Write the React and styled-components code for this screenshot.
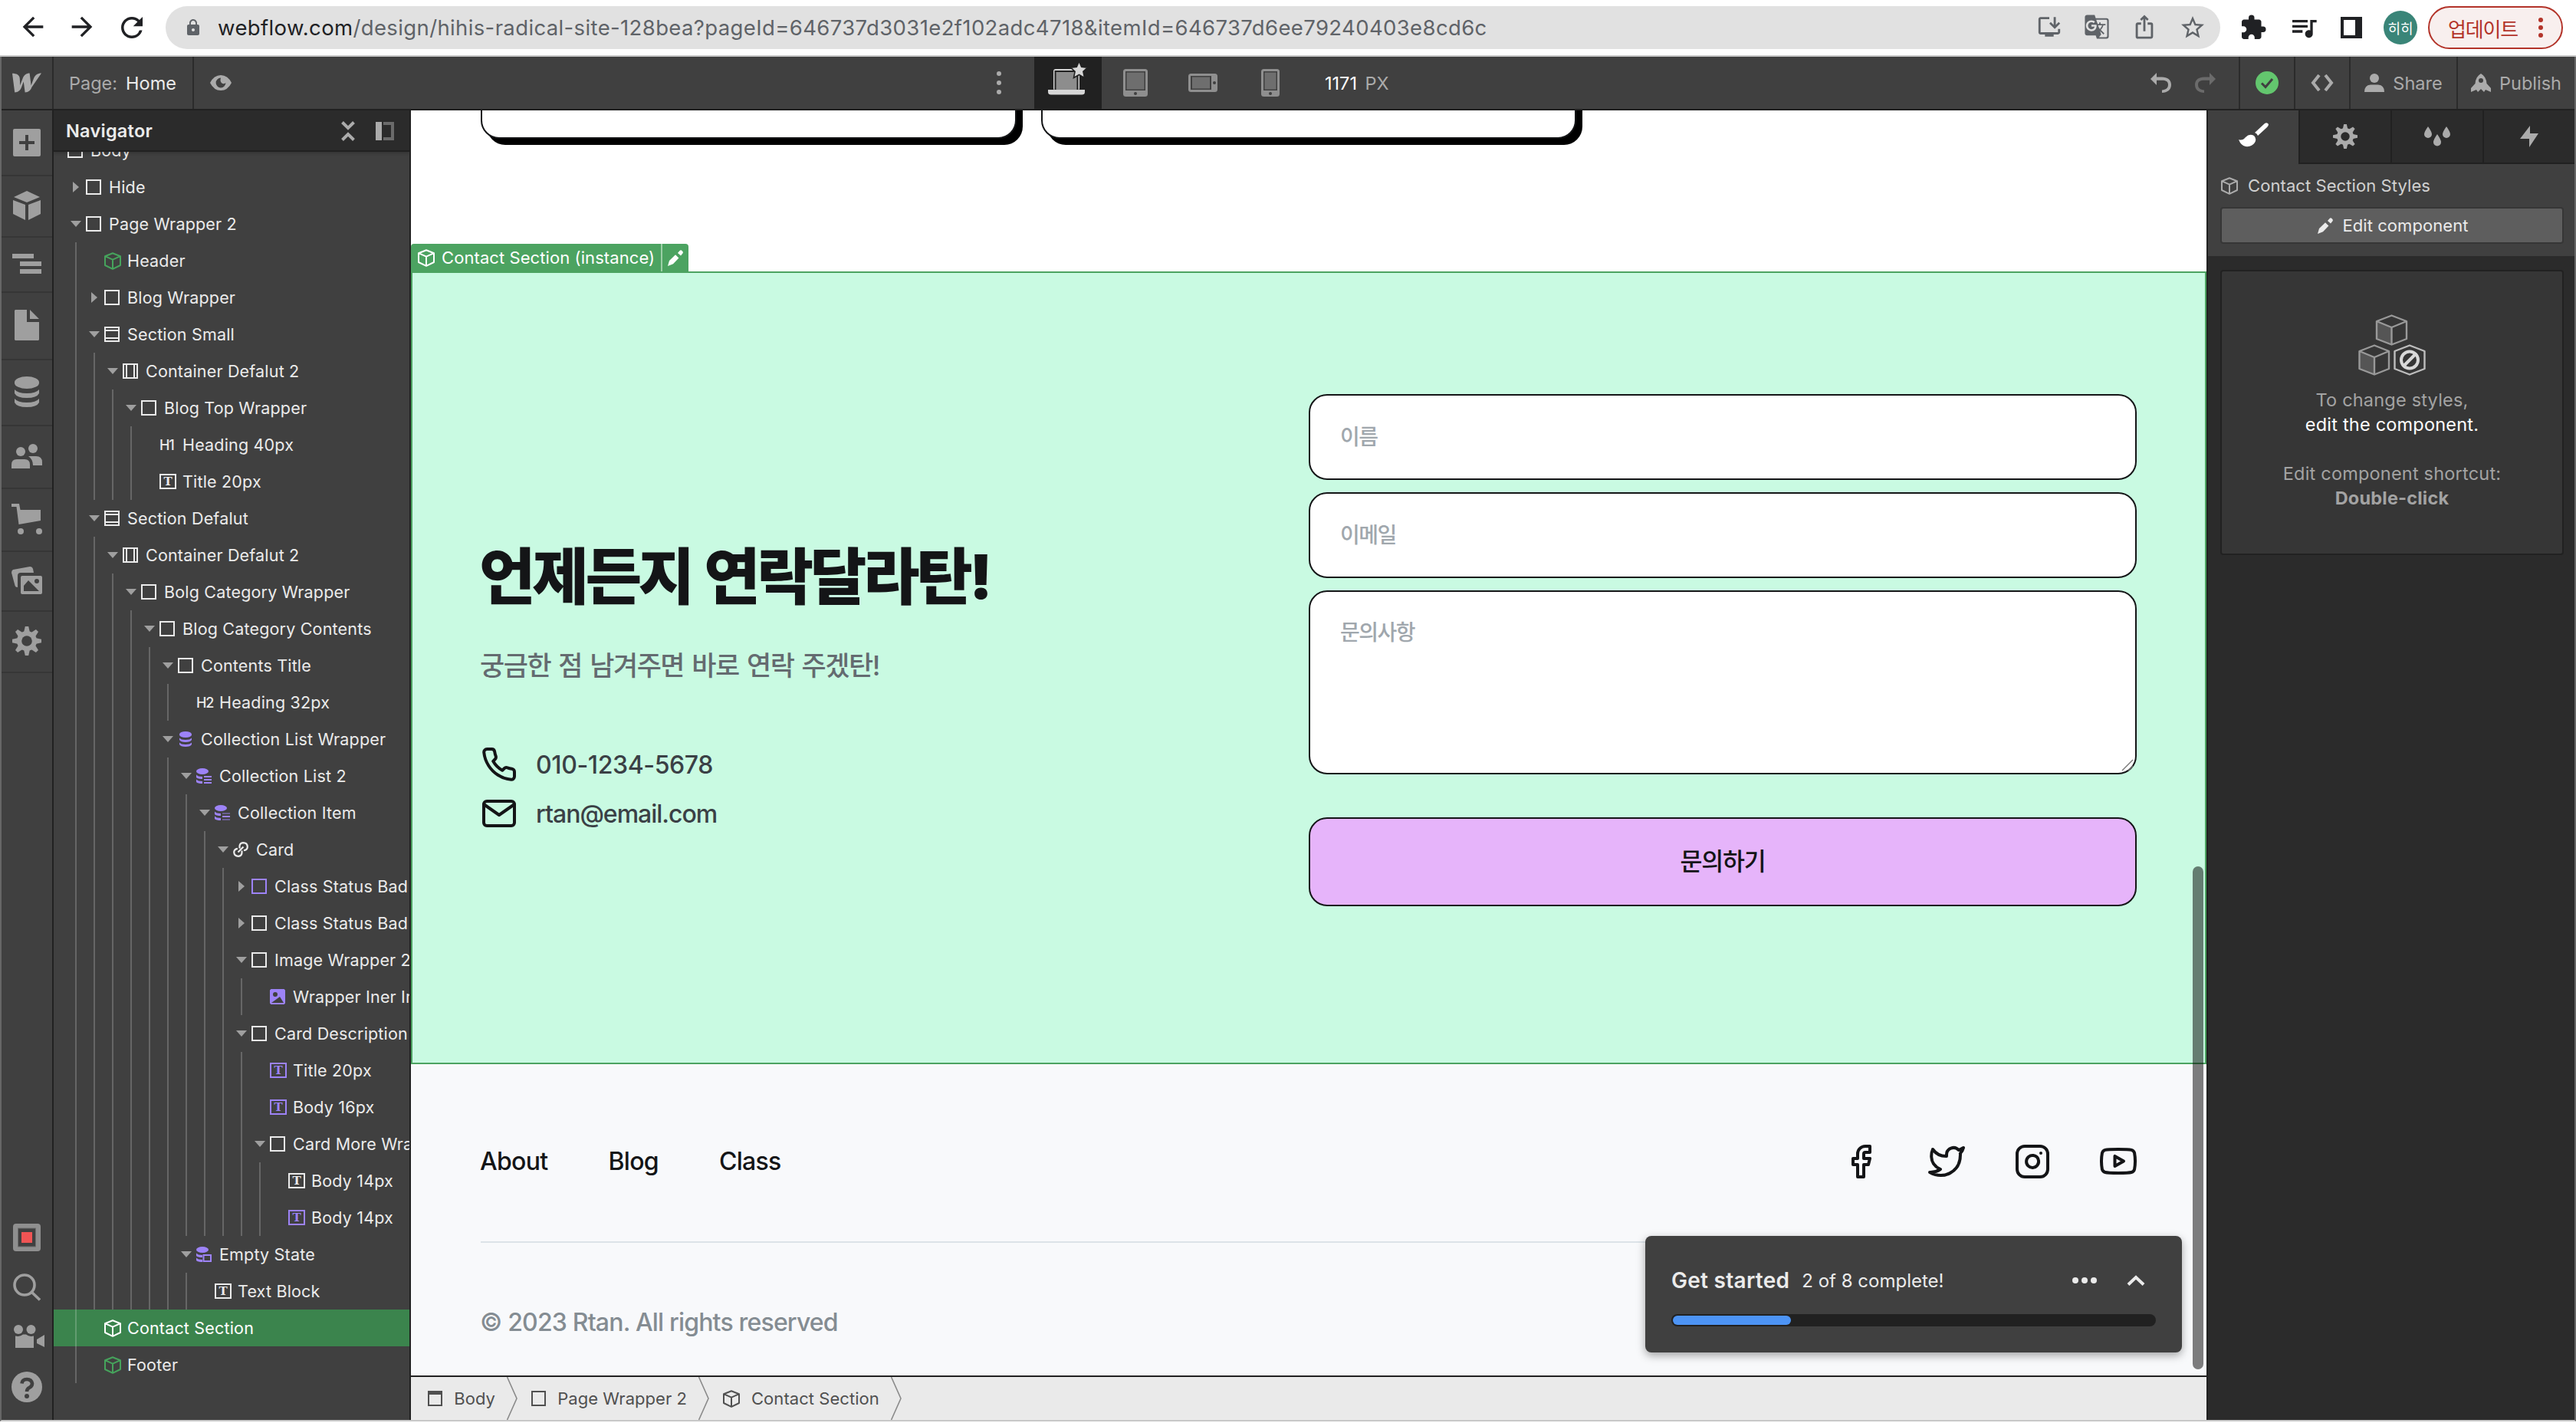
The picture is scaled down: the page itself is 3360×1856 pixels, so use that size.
import React from 'react'
import styled, { createGlobalStyle } from 'styled-components'
import {
  MdArrowBack, MdArrowForward, MdRefresh, MdLock, MdInstallDesktop, MdGTranslate,
  MdIosShare, MdStarBorder, MdExtension, MdQueueMusic,
} from 'react-icons/md'
import { FiPhone, FiMail, FiFacebook, FiTwitter, FiInstagram, FiYoutube } from 'react-icons/fi'

const GlobalStyle = createGlobalStyle`
  *, *::after { box-sizing: border-box; }
  body {
    margin: 0;
    background: #fff;
    font-family: Inter, "Noto Sans CJK KR", sans-serif;
    overflow: hidden;
  }
  svg { display: block; flex: none; }
`

/* ---------- icons ---------- */

const Svg = ({ w, h, children, ...rest }) => (
  <svg width={w} height={h} viewBox={`0 0 ${w} ${h}`} fill="currentColor" {...rest}>{children}</svg>
)

const Cube = ({ sw = 2 }) => (
  <Svg w={22} h={23} fill="none" stroke="currentColor" strokeWidth={sw} strokeLinejoin="round">
    <path d="M11 1.2 21 5.2V17L11 21.8 1 17V5.2ZM1 5.2 11 9.6 21 5.2M11 9.6V21.8" />
  </Svg>
)

const Pencil = () => (
  <Svg w={20} h={21}>
    <path d="M0 21 2 14 10 6.2 14.4 10.4 7 18.2ZM13 4 15.6 1Q17 -.4 18.8 1.2 20.6 3 19.4 4.6L17 7.6Z" />
  </Svg>
)

const Gear = ({ size = 38, color, hole }) => (
  <svg width={size} height={size} viewBox="0 0 38 38" fill={color}>
    {[0, 45, 90, 135, 180, 225, 270, 315].map((a) => (
      <path key={a} d="M15 8 16.8 0H21.2L23 8Z" transform={`rotate(${a} 19 19)`} />
    ))}
    <circle cx="19" cy="19" r="13" />
    <circle cx="19" cy="19" r="6.8" fill={hole} />
  </svg>
)

const Database = ({ w, h }) => (
  <svg width={w} height={h} viewBox="0 0 32 40" fill="currentColor">
    <rect width="32" height="16" rx="16" ry="7.5" />
    <path d="M0 17Q4 22 16 22T32 17V22Q29 28 16 28T0 22Z" />
    <path d="M0 29Q4 34 16 34T32 29V34Q29 40 16 40T0 34Z" />
  </svg>
)

const Logo = () => (
  <Svg w={38} h={26}>
    <path d="M38 .5C33 .5 29.6 3 28 7.2L24.6 16.5 22.6.5C18.2.5 15.2 3 13.8 6.8L10.2 16.2 9.8 7.2C9.4 2.8 5.6.8 0 .8L3.2 25.5C8 25.5 10.6 22.6 12 18.8L14.8 11.4 16.6 25.5C21.4 25.5 24 22.6 25.4 18.8Z" />
  </Svg>
)

const Eye = () => (
  <Svg w={28} h={20}>
    <path fillRule="evenodd" d="M0 10Q5 0 14 0T28 10Q23 20 14 20T0 10ZM14 3.6A6.4 6.4 0 1 0 20.4 10Q18 12 15.4 10.6 12.6 8.6 14 3.6Z" />
  </Svg>
)

const Undo = () => (
  <Svg w={27} h={26}>
    <path d="M0 8 8 0V5.6H15C22 5.6 27 9 27 15.6S22 26 15 26V22.4C20 22.4 23 20 23 15.6S20 9.8 15 9.8H8V16Z" />
  </Svg>
)

const Laptop = () => (
  <Svg w={52} h={44}>
    <rect x="7" y="10" width="34" height="28" rx="3" fill="#d6d6d6" />
    <rect x="8.5" y="12" width="31" height="26" fill="#212121" />
    <rect x="10.5" y="14" width="27" height="23" fill="#8d8d8d" />
    <path d="M0 37H48V40Q48 43.5 44 43.5H4Q0 43.5 0 40Z" fill="#d6d6d6" />
    <path d="m40.500 0 3.200 7.200 7.800 1-5.600 5.200 1.600 8-7-3.900-7 3.900 1.600-8-5.600-5.200 7.800-1z" fill="#d6d6d6" stroke="#212121" strokeWidth="1.600" />
  </Svg>
)

const Device = ({ w, h, side }) => (
  <Svg w={w} h={h}>
    <rect width={w} height={h} rx="3.500" fill="#8f8f8f" />
    {side
      ? <><rect x="3" y="3" width={w - 11} height={h - 6} fill="#404040" /><rect x="5" y="4.500" width={w - 15} height={h - 9} fill="#6e6e6e" /><circle cx={w - 4} cy={h / 2} r="2" fill="#404040" /></>
      : <><rect x="3" y="3" width={w - 6} height={h - 11} fill="#404040" /><rect x="4.500" y="4.500" width={w - 9} height={h - 14} fill="#6e6e6e" /><circle cx={w / 2} cy={h - 4} r="2" fill="#404040" /></>}
  </Svg>
)

const Users = () => (
  <Svg w={40} h={32}>
    <circle cx="28" cy="6" r="6" />
    <path d="M22 16H32Q40 16 40 24V28H28Q28 20 22 16Z" />
    <circle cx="12" cy="10" r="6" />
    <path d="M0 32V27Q0 20 7 20H17Q24 20 24 27V32Z" />
  </Svg>
)

const Cart = () => (
  <Svg w={40} h={40}>
    <path d="M0 0H10L11.500 8H38V22L9.500 27 6.500 4H0Z" />
    <circle cx="12" cy="36" r="4" /><circle cx="36" cy="36" r="4" />
  </Svg>
)

const Pictures = () => (
  <Svg w={40} h={36}>
    <path d="M2 4 24 0Q27 0 28 3L29 8H12Q8 8 8 12V27Q5 27 4.600 25L0 8Q0 5 2 4Z" />
    <path fillRule="evenodd" d="M14 12H38Q40 12 40 14V34Q40 36 38 36H14Q12 36 12 34V14Q12 12 14 12ZM16 32H36L22 18 16 25ZM33 16A3 3 0 1 0 33 22 3 3 0 1 0 33 16Z" />
  </Svg>
)

const Record = () => (
  <Svg w={36} h={36}>
    <rect width="36" height="36" rx="4" fill="#8f8f8f" />
    <rect x="6.500" y="6" width="23" height="24" fill="#404040" stroke="#6e6e6e" />
    <rect x="11" y="11" width="14" height="14" fill="#f05454" />
  </Svg>
)

const Search = () => (
  <Svg w={36} h={36} fill="none" stroke="currentColor" strokeWidth="3.600">
    <circle cx="15" cy="15" r="13" /><path d="M24 24 35 34.500" />
  </Svg>
)

const Camera = () => (
  <Svg w={40} h={31}>
    <circle cx="6" cy="6" r="6" /><circle cx="22.500" cy="6" r="6" />
    <path d="M2 14.500Q8 16 12 12.500H16Q20 16 26 14.500V30H2ZM30 19 40 13V29L30 24Z" />
  </Svg>
)

const Help = () => (
  <Svg w={40} h={40}>
    <circle cx="20" cy="20" r="20" />
    <path d="M13.500 15.500Q14 10 20 10T27 15.500Q27 19 23.500 20.800 20 22.600 20 26" fill="none" stroke="#404040" strokeWidth="4.600" />
    <circle cx="20" cy="32" r="3" fill="#404040" />
  </Svg>
)

const CollectionPart = ({ kind }) => (
  <Svg w={20} h={20}>
    <rect width="16" height="8" rx="8" ry="4" />
    <path d="M0 8.500Q2 11 8 11V14Q2 14 0 12ZM0 14.500Q2 17 8 17V20Q2 20 0 18Z" />
    {kind === 'box'
      ? <rect x="9.500" y="11" width="9.500" height="8" fill="none" stroke="currentColor" strokeWidth="2" />
      : <><path d="M10 10H20V12H10ZM10 18H20V20H10Z" opacity={kind === 'item' ? 0.45 : 1} /><path d="M10 14H20V16H10Z" /></>}
  </Svg>
)

const Chain = () => (
  <Svg w={20} h={20} fill="none" stroke="currentColor" strokeWidth="2.200">
    <path d="M8.500 8.500V5.500Q9 1.500 13 1.200 18.600 1.200 18.800 6.600 18.600 10.600 14 11.200M11.500 11.500V14.500Q11 18.500 7 18.800 1.400 18.800 1.200 13.400 1.400 9.400 6 8.800M6.500 13.500 13.500 6.500" />
  </Svg>
)

const Picture = () => (
  <Svg w={20} h={20}>
    <path fillRule="evenodd" d="M1.500 0H18.500L20 1.500V18.500L18.500 20H1.500L0 18.500V1.500ZM2 18H18L13 10ZM7 4A3 3 0 1 0 7 10 3 3 0 1 0 7 4Z" />
  </Svg>
)

const Boxes = () => (
  <Svg w={88} h={80} fill="none" strokeWidth="2.400" strokeLinejoin="round">
    <g stroke="#999">
      <path d="M24 9.500 43.500 17V39L24 32Z" fill="#555" stroke="none" />
      <path d="M43.500 1.500 63 9V32L43.500 39.500 24 32V9ZM24 9 43.500 17 63 9M43.500 17V39.500" />
      <path d="M1.500 48 21 56V78L1.500 71Z" fill="#555" stroke="none" />
      <path d="M21 40.500 40 48V71L21 78.500 1.500 71V48ZM1.500 48 21 56 40 48M21 56V78.500" />
    </g>
    <path d="M67 40.500 86.500 48V71L67 78.500 47.500 71V48Z" stroke="#bdbdbd" />
    <circle cx="67" cy="59.500" r="11" stroke="#d9d9d9" strokeWidth="4" />
    <path d="M59.500 67 74.500 52" stroke="#d9d9d9" strokeWidth="4" />
  </Svg>
)

const Chevron = () => (
  <Svg w={14} h={56} fill="none" stroke="#8a8a8a" strokeWidth="1.600">
    <path d="M.5 0 13 28 .5 56" />
  </Svg>
)

/* ---------- browser bar ---------- */

const BrowserBar = styled.header`
  display: flex;
  align-items: center;
  height: 74px;
  padding: 0 16px 0 23px;
  background: #fff;
  border-bottom: 2px solid #c9c9c9;
  color: #202124;
`
const NavButtons = styled.div`
  display: flex;
  gap: 24px;
  width: 193px;
`
const AddressBar = styled.div`
  display: flex;
  align-items: center;
  width: 2680px;
  height: 56px;
  padding: 0 18px 0 24px;
  border-radius: 28px;
  background: #e1e1e1;
  color: #5f6368;
`
const Url = styled.div`
  flex: 1;
  margin-left: 20px;
  font-size: 27.500px;
  letter-spacing: 0.37px;
  white-space: nowrap;
  b { font-weight: 400; color: #202124; }
`
const AddressIcons = styled.div`
  display: flex;
  gap: 28px;
`
const Extensions = styled.div`
  display: flex;
  align-items: center;
  gap: 28px;
  margin-left: 25px;
`
const SidePanel = styled.div`
  width: 28px;
  height: 28px;
  border: solid #202124;
  border-width: 4px 9px 4px 4px;
`
const Avatar = styled.div`
  display: grid;
  place-items: center;
  width: 44px;
  height: 44px;
  border-radius: 50%;
  background: #3a8578;
  color: #fff;
  font-size: 18px;
`
const UpdatePill = styled.div`
  display: flex;
  align-items: center;
  justify-content: space-between;
  width: 176px;
  height: 56px;
  margin-left: 14px;
  padding: 0 24px;
  border: 2px solid #b3342a;
  border-radius: 28px;
  background: #f8efee;
  color: #b3342a;
  font-size: 26px;
  letter-spacing: -1.200px;
`

/* ---------- designer frame ---------- */

const Frame = styled.div`
  display: flex;
  flex-direction: column;
  height: 1780px;
  border: solid #666;
  border-width: 0 2px;
  border-bottom: 2px solid #c8c8c8;
  background: #404040;
`
const Toolbar = styled.div`
  display: flex;
  align-items: center;
  height: 70px;
  flex: none;
  border-bottom: 2px solid #212121;
  color: #ababab;
  font-size: 23.500px;
`
const LogoCell = styled.div`
  display: flex;
  align-items: center;
  width: 68px;
  height: 68px;
  padding-left: 14px;
  border-right: 2px solid #2b2b2b;
`
const PageCell = styled.div`
  display: flex;
  align-items: center;
  gap: 11px;
  width: 183px;
  height: 68px;
  margin-right: 21px;
  padding-left: 20px;
  border-right: 2px solid #2b2b2b;
  span { color: #ebebeb; }
`
const Dots = styled.div`
  display: flex;
  flex-direction: ${({ $row }) => ($row ? 'row' : 'column')};
  gap: ${({ $gap }) => $gap}px;
  i {
    width: ${({ $size }) => $size}px;
    height: ${({ $size }) => $size}px;
    border-radius: 50%;
    background: currentColor;
  }
`
const Breakpoints = styled.div`
  display: flex;
  align-items: center;
  margin-left: 998px;
`
const BreakpointList = styled.div`
  display: flex;
  align-items: center;
  margin-left: 43px;
`
const Breakpoint = styled.div`
  display: flex;
  align-items: center;
  justify-content: center;
  width: 88px;
  height: 68px;
  padding-bottom: ${({ $active }) => ($active ? 13 : 0)}px;
  background: ${({ $active }) => ($active ? '#212121' : 'transparent')};
`
const CanvasWidth = styled.div`
  margin-left: 27px;
  word-spacing: 4px;
  b { font-weight: 400; color: #fff; }
`
const ToolbarRight = styled.div`
  display: flex;
  align-items: center;
  margin-left: auto;
`
const History = styled.div`
  display: flex;
  gap: 31px;
  padding-right: 30px;
  padding-bottom: 1px;
  svg:last-child { transform: scaleX(-1); opacity: 0.4; }
`
const ToolCell = styled.div`
  display: flex;
  align-items: center;
  justify-content: center;
  gap: 11px;
  width: ${({ $w }) => $w}px;
  height: 68px;
  border-left: 2px solid #2b2b2b;
`
const Workspace = styled.div`
  display: flex;
  flex: 1;
  min-height: 0;
`

const Rail = styled.nav`
  display: flex;
  flex-direction: column;
  width: 68px;
  padding: 0 1px 11px 0;
  border-right: 2px solid #212121;
  color: #9f9f9f;
`
const RailItem = styled.div`
  display: flex;
  align-items: center;
  justify-content: center;
  height: ${({ $h }) => $h}px;
  margin-right: -1px;
  padding-right: 1px;
  padding-bottom: ${({ $first }) => ($first ? 0 : 3)}px;
  border-bottom: 2px solid #363636;
`
const RailTool = styled.div`
  display: flex;
  align-items: center;
  justify-content: center;
  height: 65px;
  padding-left: ${({ $shift }) => $shift || 0}px;
`
const Spacer = styled.div`
  flex: 1;
`

/* ---------- navigator ---------- */

const Navigator = styled.aside`
  width: 466px;
  border-right: 2px solid #212121;
  overflow: hidden;
`
const NavHeader = styled.div`
  position: relative;
  display: flex;
  align-items: center;
  height: 54px;
  padding: 1px 20px 0 16px;
  background: #2b2b2b;
  border-bottom: 2px solid #212121;
  box-shadow: 0 2px 4px rgba(0, 0, 0, 0.2);
  color: #ababab;
  h2 {
    flex: 1;
    margin: 0;
    color: #ebebeb;
    font-size: 23.500px;
    font-weight: 600;
    letter-spacing: 0.25px;
  }
  svg + svg { margin-left: 27px; }
`
const Tree = styled.div`
  margin-top: -26px;
`
const TreeRow = styled.div`
  display: flex;
  align-items: center;
  height: 48px;
  padding-left: 17px;
  background: ${({ $selected }) => ($selected ? '#3b844d' : 'transparent')};
  color: ${({ $selected }) => ($selected ? '#fff' : '#ebebeb')};
  font-size: 21.500px;
  letter-spacing: 0.18px;
  white-space: nowrap;
`
const Guide = styled.div`
  align-self: stretch;
  flex: none;
  width: 24px;
  padding: 0 11px;
  background: rgba(255, 255, 255, 0.2) content-box;
`
const Arrow = styled.div`
  display: flex;
  justify-content: center;
  flex: none;
  width: 24px;
  color: #9f9f9f;
`
const IconSlot = styled.div`
  display: flex;
  align-items: center;
  flex: none;
  width: 31px;
  padding-left: 1px;
  color: ${({ $color }) => $color};
`
const Square = styled.div`
  width: 20px;
  height: 20px;
  border: 2px solid currentColor;
  padding: ${({ $kind }) => ($kind === 'section' ? '2px 0' : $kind === 'container' ? '0 2px' : 0)};
  &::after {
    content: '';
    display: block;
    height: 100%;
    border: solid currentColor;
    border-width: ${({ $kind }) => ($kind === 'section' ? '2px 0' : $kind === 'container' ? '0 2px' : 0)};
  }
`
const TextBadge = styled.div`
  flex: none;
  width: 22px;
  height: 20px;
  border: 2px solid currentColor;
  font: bold 15px/16px "DejaVu Serif", serif;
  letter-spacing: 0;
  text-align: center;
`
const HeadingBadge = styled.div`
  font-size: 18px;
  font-weight: 500;
  letter-spacing: -1.200px;
`

const PURPLE = '#9d83f7'
const GREEN = '#46a35c'

// depth, arrow ('r' closed, 'd' open), icon, label, color
const tree = [
  [0, '', 'body', 'Body'],
  [1, 'r', 'box', 'Hide'],
  [1, 'd', 'box', 'Page Wrapper 2'],
  [2, '', 'cube', 'Header', GREEN],
  [2, 'r', 'box', 'Blog Wrapper'],
  [2, 'd', 'section', 'Section Small'],
  [3, 'd', 'container', 'Container Defalut 2'],
  [4, 'd', 'box', 'Blog Top Wrapper'],
  [5, '', 'H1', 'Heading 40px'],
  [5, '', 'text', 'Title 20px'],
  [2, 'd', 'section', 'Section Defalut'],
  [3, 'd', 'container', 'Container Defalut 2'],
  [4, 'd', 'box', 'Bolg Category Wrapper'],
  [5, 'd', 'box', 'Blog Category Contents'],
  [6, 'd', 'box', 'Contents Title'],
  [7, '', 'H2', 'Heading 32px'],
  [6, 'd', 'db', 'Collection List Wrapper', PURPLE],
  [7, 'd', 'list', 'Collection List 2', PURPLE],
  [8, 'd', 'item', 'Collection Item', PURPLE],
  [9, 'd', 'link', 'Card'],
  [10, 'r', 'box', 'Class Status Bad', PURPLE],
  [10, 'r', 'box', 'Class Status Bad'],
  [10, 'd', 'box', 'Image Wrapper 2'],
  [11, '', 'image', 'Wrapper Iner Im', PURPLE],
  [10, 'd', 'box', 'Card Description'],
  [11, '', 'text', 'Title 20px', PURPLE],
  [11, '', 'text', 'Body 16px', PURPLE],
  [11, 'd', 'box', 'Card More Wra'],
  [12, '', 'text', 'Body 14px'],
  [12, '', 'text', 'Body 14px', PURPLE],
  [7, 'd', 'empty', 'Empty State', PURPLE],
  [8, '', 'text', 'Text Block'],
  [2, '', 'cube', 'Contact Section', '#fff', true],
  [2, '', 'cube', 'Footer', GREEN],
]

const TreeIcon = ({ kind }) => {
  switch (kind) {
    case 'cube': return <Cube />
    case 'text': return <TextBadge>T</TextBadge>
    case 'H1':
    case 'H2': return <HeadingBadge>{kind}</HeadingBadge>
    case 'db': return <Database w={20} h={20} />
    case 'list': return <CollectionPart kind="list" />
    case 'item': return <CollectionPart kind="item" />
    case 'empty': return <CollectionPart kind="box" />
    case 'link': return <Chain />
    case 'image': return <Picture />
    default: return <Square $kind={kind} />
  }
}

/* ---------- canvas ---------- */

const Canvas = styled.main`
  position: relative;
  display: flex;
  flex-direction: column;
  width: 2342px;
  background: #fff;
  overflow: hidden;
`
const CardGrid = styled.div`
  display: grid;
  grid-template-columns: repeat(3, 1fr);
  gap: 32px;
  height: 210px;
  padding: 0 91px;
`
const Card = styled.div`
  height: 80px;
  margin-top: -43px;
  border: 2px solid #141517;
  border-radius: 24px;
  background: #fff;
  box-shadow: 8px 8px 0 #000;
`
const ContactSection = styled.section`
  position: relative;
  display: grid;
  grid-template-columns: 1fr 1fr;
  height: 1034px;
  padding: 158px 89px 0;
  border: 2px solid #4ca361;
  background: #c9fae2;
`
const InstanceTag = styled.div`
  position: absolute;
  left: -2px;
  top: -38px;
  display: flex;
  align-items: center;
  height: 36px;
  padding-left: 9px;
  border-radius: 4px 4px 0 0;
  background: #4ca361;
  color: #fff;
  font-size: 22px;
  letter-spacing: 0.08px;
  span { width: 286px; margin-left: 9px; white-space: nowrap; }
  div {
    display: grid;
    place-items: center;
    width: 36px;
    height: 36px;
    border-left: 2px solid #9ccfa7;
  }
`
const Intro = styled.div`
  padding-top: 186px;
  h1 {
    margin: 0 0 0 -2px;
    color: #141517;
    font-size: 80px;
    font-weight: 900;
    line-height: 104px;
    letter-spacing: -4.400px;
    word-spacing: 5px;
  }
  p {
    margin: 38px 0 79px -1px;
    color: #646b70;
    font-size: 35px;
    font-weight: 500;
    line-height: 52px;
    letter-spacing: -1.500px;
    word-spacing: 2.400px;
  }
`
const ContactLine = styled.div`
  display: flex;
  align-items: center;
  gap: 24px;
  height: 48px;
  margin-bottom: 16px;
  color: #3a4045;
  font-size: 32px;
  font-weight: 500;
  letter-spacing: ${({ $ls }) => $ls}px;
  svg { color: #141517; }
`
const Form = styled.div`
  display: flex;
  flex-direction: column;
  gap: 16px;
`
const Field = styled.div`
  position: relative;
  height: ${({ $h }) => $h || 112}px;
  padding: 0 39px;
  border: 2px solid #141517;
  border-radius: 24px;
  background: #fff;
  color: #a0a7ad;
  font-size: 28px;
  font-weight: 500;
  line-height: ${({ $h }) => ($h ? 106 : 109)}px;
  letter-spacing: -1.500px;
`
const Resize = styled.div`
  position: absolute;
  right: 2px;
  bottom: 2px;
`
const Submit = styled.div`
  height: 116px;
  margin-top: 40px;
  border: 2px solid #141517;
  border-radius: 24px;
  background: #e6b4fa;
  color: #141517;
  font-size: 31.500px;
  font-weight: 500;
  line-height: 112px;
  letter-spacing: -1.200px;
  text-align: center;
`
const Footer = styled.footer`
  height: 406px;
  padding: 0 91px;
  background: #f8f9fb;
  color: #141517;
  font-size: 32px;
  font-weight: 500;
  letter-spacing: -0.7px;
`
const FooterTop = styled.div`
  display: flex;
  align-items: center;
  height: 233px;
  padding-top: 22px;
  border-bottom: 2px solid #dce3e8;
`
const FooterLinks = styled.div`
  display: flex;
  flex: 1;
  gap: 79px;
  margin-left: -1px;
`
const Socials = styled.div`
  display: flex;
  gap: 64px;
`
const Copyright = styled.div`
  margin-left: -1px;
  padding-top: 84px;
  color: #848c92;
  line-height: 40px;
  letter-spacing: -0.82px;
`
const Breadcrumbs = styled.div`
  display: flex;
  align-items: center;
  height: 58px;
  padding-left: 22px;
  border-top: 2px solid #212121;
  background: #eaeaea;
  color: #505050;
  font-size: 22px;
  letter-spacing: 0.05px;
`
const Crumb = styled.div`
  display: flex;
  align-items: center;
  width: ${({ $w }) => $w}px;
  gap: 15px;
  padding-left: ${({ $pad }) => $pad || 0}px;
  white-space: nowrap;
  svg:last-child { margin-left: auto; }
`
const WindowIcon = styled.div`
  width: 20px;
  height: 20px;
  border: 2px solid currentColor;
  border-top-width: 5px;
`
const Scrollbar = styled.div`
  position: absolute;
  right: 4px;
  top: 986px;
  width: 14px;
  height: 656px;
  border-radius: 7px;
  background: rgba(0, 0, 0, 0.5);
`
const GetStarted = styled.div`
  position: absolute;
  left: 1610px;
  top: 1468px;
  width: 700px;
  height: 152px;
  padding: 38px 34px 0;
  border-radius: 8px;
  background: #404040;
  box-shadow: 0 4px 12px rgba(0, 0, 0, 0.35);
  color: #ebebeb;
`
const StartedTop = styled.div`
  display: flex;
  align-items: center;
  height: 40px;
  font-size: 24px;
  white-space: nowrap;
  b { margin-right: 16px; font-size: 28px; font-weight: 600; letter-spacing: 0.28px; }
  span { flex: 1; }
  svg { margin: 0 14px 0 39px; }
`
const Track = styled.div`
  height: 16px;
  margin-top: 24px;
  padding: 2px;
  border-radius: 8px;
  background: #212121;
`
const Fill = styled.div`
  height: 12px;
  border-radius: 6px;
  background: #4d94f5;
`

/* ---------- style panel ---------- */

const Panel = styled.aside`
  flex: 1;
  border-left: 2px solid #212121;
  background: #2b2b2b;
  font-size: 22px;
`
const Tabs = styled.div`
  display: flex;
  background: #404040;
`
const Tab = styled.div`
  display: flex;
  align-items: center;
  justify-content: center;
  width: ${({ $active }) => ($active ? 118 : 120)}px;
  height: 70px;
  padding-bottom: ${({ $active }) => ($active ? 6 : 0)}px;
  border: 0 solid #212121;
  border-width: ${({ $active }) => ($active ? '0' : '0 0 2px 2px')};
  background: ${({ $active }) => ($active ? '#404040' : '#2b2b2b')};
  color: ${({ $active }) => ($active ? '#fff' : '#ababab')};
`
const PanelHead = styled.div`
  height: 120px;
  padding: 0 14px 0 16px;
  background: #404040;
`
const PanelTitle = styled.div`
  display: flex;
  align-items: center;
  gap: 13px;
  height: 56px;
  padding-left: 1px;
  color: #d0d0d0;
  letter-spacing: 0.08px;
  svg { color: #ababab; }
`
const EditButton = styled.div`
  display: flex;
  align-items: center;
  justify-content: center;
  gap: 12px;
  height: 48px;
  border: 2px solid #363636;
  border-radius: 4px;
  background: #5e5e5e;
  color: #ebebeb;
  letter-spacing: 0.08px;
  svg { margin-left: 3px; }
`
const EmptyBox = styled.div`
  display: flex;
  flex-direction: column;
  align-items: center;
  height: 372px;
  margin: 18px 14px 0 16px;
  padding-top: 56px;
  border: 2px solid #212121;
  border-radius: 4px;
  background: #363636;
  p {
    margin: 16px 0;
    color: #a3a3a3;
    font-size: 23.500px;
    line-height: 32px;
    letter-spacing: 0.2px;
    text-align: center;
  }
  p + p { margin-top: 16px; }
  em { font-style: normal; color: #fff; }
`

const App = () => {
  return (
    <>
      <GlobalStyle />
      <BrowserBar>
        <NavButtons>
          <MdArrowBack size={40} />
          <MdArrowForward size={40} />
          <MdRefresh size={42} />
        </NavButtons>
        <AddressBar>
          <MdLock size={24} />
          <Url><b>webflow.com</b>/design/hihis-radical-site-128bea?pageId=646737d3031e2f102adc4718&amp;itemId=646737d6ee79240403e8cd6c</Url>
          <AddressIcons>
            <MdInstallDesktop size={34} />
            <MdGTranslate size={34} />
            <MdIosShare size={34} />
            <MdStarBorder size={36} />
          </AddressIcons>
        </AddressBar>
        <Extensions>
          <MdExtension size={36} />
          <MdQueueMusic size={40} />
          <SidePanel />
          <Avatar>히히</Avatar>
        </Extensions>
        <UpdatePill>
          업데이트
          <Dots $size={6} $gap={4}><i /><i /><i /></Dots>
        </UpdatePill>
      </BrowserBar>

      <Frame>
        <Toolbar>
          <LogoCell><Logo /></LogoCell>
          <PageCell>Page: <span>Home</span></PageCell>
          <Eye />
          <Breakpoints>
            <Dots $size={6} $gap={6}><i /><i /><i /></Dots>
            <BreakpointList>
              <Breakpoint $active><Laptop /></Breakpoint>
              <Breakpoint><Device w={32} h={36} /></Breakpoint>
              <Breakpoint><Device w={38} h={24} side /></Breakpoint>
              <Breakpoint><Device w={24} h={36} /></Breakpoint>
            </BreakpointList>
          </Breakpoints>
          <CanvasWidth><b>1171</b> PX</CanvasWidth>
          <ToolbarRight>
            <History><Undo /><Undo /></History>
            <ToolCell $w={72}>
              <Svg w={30} h={30}>
                <circle cx="15" cy="15" r="15" fill="#63c66e" />
                <path d="M8 15.500 13 20.500 22 10" fill="none" stroke="#404040" strokeWidth="3" />
              </Svg>
            </ToolCell>
            <ToolCell $w={72}>
              <Svg w={30} h={22} fill="none" stroke="currentColor" strokeWidth="4">
                <path d="M11 1 3 11 11 21M19 1 27 11 19 21" />
              </Svg>
            </ToolCell>
            <ToolCell $w={140}>
              <Svg w={26} h={24}><circle cx="13" cy="6" r="6" /><path d="M0 24Q0 15 8 14.500H18Q26 15 26 24Z" /></Svg>
              Share
            </ToolCell>
            <ToolCell $w={154}>
              <Svg w={26} h={24}>
                <path fillRule="evenodd" d="M13 0Q20 4 20.500 13L26 19V24L19 21 17 24 13 20 9 24 7 21 0 24V19L5.500 13Q6 4 13 0ZM13 6A3 3 0 1 0 13 12 3 3 0 1 0 13 6Z" />
              </Svg>
              Publish
            </ToolCell>
          </ToolbarRight>
        </Toolbar>

        <Workspace>
          <Rail>
            <RailItem $h={86} $first>
              <Svg w={36} h={36}><rect width="36" height="36" rx="2" /><path d="M8 18H28M18 8V28" stroke="#404040" strokeWidth="4" /></Svg>
            </RailItem>
            <RailItem $h={80}>
              <Svg w={36} h={38}><path d="M18 0 35 8 18 15 1 8ZM0 12 16 18V38L0 30ZM36 12 20 18V38L36 30Z" /></Svg>
            </RailItem>
            <RailItem $h={72}>
              <Svg w={38} h={26}><path d="M0 0H28V6H0ZM10 10H38V16H10ZM10 20H38V26H10Z" /></Svg>
            </RailItem>
            <RailItem $h={88}>
              <Svg w={32} h={40}><path d="M1 0H16V16H32V39L31 40H1L0 39V1ZM20 0 32 12H20Z" /></Svg>
            </RailItem>
            <RailItem $h={86}><Database w={32} h={40} /></RailItem>
            <RailItem $h={82}><Users /></RailItem>
            <RailItem $h={82}><Cart /></RailItem>
            <RailItem $h={78}><Pictures /></RailItem>
            <RailItem $h={80}><Gear color="#9f9f9f" hole="#404040" /></RailItem>
            <Spacer />
            <RailTool><Record /></RailTool>
            <RailTool><Search /></RailTool>
            <RailTool $shift={6}><Camera /></RailTool>
            <RailTool><Help /></RailTool>
          </Rail>

          <Navigator>
            <NavHeader>
              <h2>Navigator</h2>
              <Svg w={18} h={26} fill="none" stroke="currentColor" strokeWidth="4">
                <path d="M1.500 1.500 9 9 16.500 1.500M1.500 24.500 9 17 16.500 24.500" />
              </Svg>
              <Svg w={24} h={24}>
                <rect width="8" height="24" />
                <path d="M10 0H24V24H10V20H20V4H10Z" opacity=".5" />
              </Svg>
            </NavHeader>
            <Tree>
              {tree.map(([depth, arrow, icon, label, color, selected], i) => (
                <TreeRow key={i} $selected={selected}>
                  {Array.from({ length: Math.max(depth - 1, 0) }, (_, g) => <Guide key={g} />)}
                  {depth > 0 && (
                    <Arrow>
                      {arrow === 'r' && <Svg w={8} h={14}><path d="M0 0 8 7 0 14Z" /></Svg>}
                      {arrow === 'd' && <Svg w={14} h={8}><path d="M0 0H14L7 8Z" /></Svg>}
                    </Arrow>
                  )}
                  <IconSlot $color={color || '#ebebeb'}><TreeIcon kind={icon} /></IconSlot>
                  {label}
                </TreeRow>
              ))}
            </Tree>
          </Navigator>

          <Canvas>
            <CardGrid>
              <Card />
              <Card />
            </CardGrid>
            <ContactSection>
              <InstanceTag>
                <Cube />
                <span>Contact Section (instance)</span>
                <div><Pencil /></div>
              </InstanceTag>
              <Intro>
                <h1>언제든지 연락달라탄!</h1>
                <p>궁금한 점 남겨주면 바로 연락 주겠탄!</p>
                <ContactLine $ls={-0.4}><FiPhone size={48} />010-1234-5678</ContactLine>
                <ContactLine $ls={-1}><FiMail size={48} />rtan@email.com</ContactLine>
              </Intro>
              <Form>
                <Field>이름</Field>
                <Field>이메일</Field>
                <Field $h={240}>
                  문의사항
                  <Resize>
                    <Svg w={16} h={16} fill="none" stroke="#777" strokeWidth="1.400"><path d="M1 15 15 1M9 15 15 9" /></Svg>
                  </Resize>
                </Field>
                <Submit>문의하기</Submit>
              </Form>
            </ContactSection>
            <Footer>
              <FooterTop>
                <FooterLinks>
                  <span>About</span>
                  <span>Blog</span>
                  <span>Class</span>
                </FooterLinks>
                <Socials>
                  <FiFacebook size={48} />
                  <FiTwitter size={48} />
                  <FiInstagram size={48} />
                  <FiYoutube size={48} />
                </Socials>
              </FooterTop>
              <Copyright>© 2023 Rtan. All rights reserved</Copyright>
            </Footer>
            <Breadcrumbs>
              <Crumb $w={117}><WindowIcon />Body<Chevron /></Crumb>
              <Crumb $w={250} $pad={18}><Square />Page Wrapper 2<Chevron /></Crumb>
              <Crumb $w={250} $pad={18}><Cube />Contact Section<Chevron /></Crumb>
            </Breadcrumbs>
            <Scrollbar />
            <GetStarted>
              <StartedTop>
                <b>Get started</b>
                <span>2 of 8 complete!</span>
                <Dots $row $size={8} $gap={4}><i /><i /><i /></Dots>
                <Svg w={24} h={14} fill="none" stroke="currentColor" strokeWidth="4"><path d="M2 12.500 12 3 22 12.500" /></Svg>
              </StartedTop>
              <Track><Fill style={{ width: `${(2 / 8) * 98}%` }} /></Track>
            </GetStarted>
          </Canvas>

          <Panel>
            <Tabs>
              <Tab $active>
                <Svg w={39} h={32}>
                  <path d="M0 22Q5 24 9 19 14 13.500 20 17 24 21 21 26 17 32 9 31 3 30 0 22ZM21 13 34 1Q37-1 39 2 39 4 37 6L25 17Q24 14 21 13Z" />
                </Svg>
              </Tab>
              <Tab><Gear size={32} color="#ababab" hole="#2b2b2b" /></Tab>
              <Tab>
                <Svg w={34} h={26}>
                  <path d="M5 0Q10 7 10 10A5 5 0 0 1 0 10Q0 7 5 0ZM29 0Q34 7 34 10A5 5 0 0 1 24 10Q24 7 29 0ZM17 10Q22 17 22 20.500A5 5 0 0 1 12 20.500Q12 17 17 10Z" />
                </Svg>
              </Tab>
              <Tab><Svg w={24} h={28}><path d="M13 0V10H24L12 28V17H0Z" /></Svg></Tab>
            </Tabs>
            <PanelHead>
              <PanelTitle><Cube />Contact Section Styles</PanelTitle>
              <EditButton><Pencil />Edit component</EditButton>
            </PanelHead>
            <EmptyBox>
              <Boxes />
              <p>To change styles,<br /><em>edit the component.</em></p>
              <p>Edit component shortcut:<br /><b>Double-click</b></p>
            </EmptyBox>
          </Panel>
        </Workspace>
      </Frame>
    </>
  )
}

export default App
